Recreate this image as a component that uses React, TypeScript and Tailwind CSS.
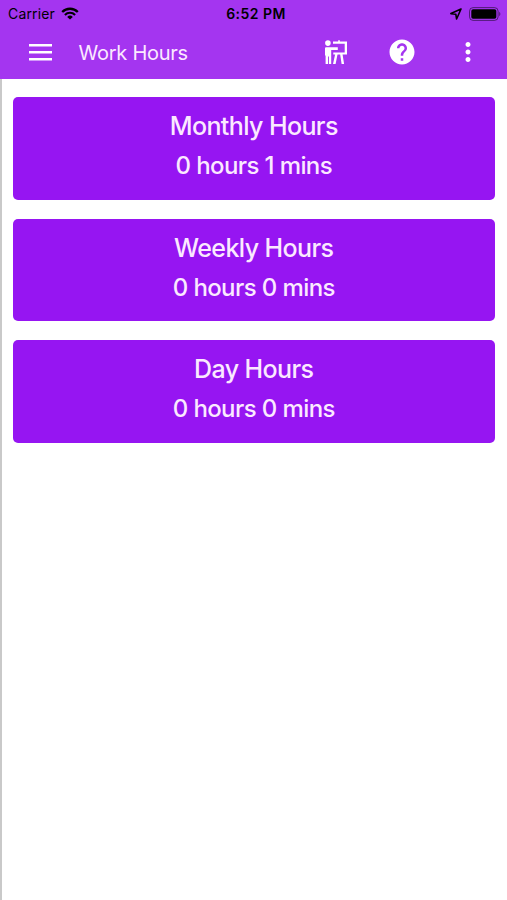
import React, { FC } from "react";
import { MdHelp, MdMoreVert } from "react-icons/md";

interface HoursCardProps {
    title: string;
    hours: number;
    mins: number;
}

const cards: HoursCardProps[] = [
    { title: "Monthly Hours", hours: 0, mins: 1 },
    { title: "Weekly Hours", hours: 0, mins: 0 },
    { title: "Day Hours", hours: 0, mins: 0 },
];

const WifiIcon: FC = () => (
    <svg className="h-[13px] w-[18px]" viewBox="0 0 18 13" fill="none" stroke="currentColor">
        <path d="M1.2 5A11 11 0 0 1 16.8 5" strokeWidth="2.3" />
        <path d="M3.9 7.9A7.2 7.2 0 0 1 14.1 7.9" strokeWidth="2.1" />
        <path d="M9 12.6 6.2 9.9a4 4 0 0 1 5.6 0z" fill="currentColor" stroke="none" />
    </svg>
);

const LocationIcon: FC = () => (
    <svg className="h-3 w-3" viewBox="0 0 12 12" fill="none" stroke="currentColor">
        <path d="M11 1 .9 5.6 5.8 6.2 6.6 11z" strokeWidth="1.6" strokeLinejoin="round" />
    </svg>
);

const BatteryIcon: FC = () => (
    <svg className="h-[14px] w-8" viewBox="0 0 32 14">
        <rect x="0.5" y="0.6" width="28.6" height="12.8" rx="3.6" fill="none" stroke="#000" strokeOpacity="0.5" />
        <rect x="2.3" y="2.2" width="25" height="9.6" rx="1.8" fill="#000" />
        <path d="M30.2 4.8v4.4c1.6-.7 1.6-3.7 0-4.4z" fill="#000" fillOpacity="0.5" />
    </svg>
);

const MenuIcon: FC = () => (
    <svg className="h-[17px] w-[23px]" viewBox="0 0 23 17" fill="currentColor">
        <path d="M0 0h23v2.6H0zM0 7h23v2.6H0zM0 14h23v2.6H0z" />
    </svg>
);

const PresenterIcon: FC = () => (
    <svg className="h-6 w-[22px]" viewBox="0 0 22 24" fill="currentColor">
        <circle cx="2.9" cy="3.1" r="2.8" />
        <path d="M1.4 7.2h11.4v2.9H6.2V24H4v-7.6h-.9V24H.6v-8.4H0V8.6c0-.9.5-1.4 1.4-1.4z" />
        <path d="M8 1.6h5.2V.2h1.6v1.4H22v13H8.3v-2.2h11.4V3.8H8z" />
        <path d="M10.2 14h2.4l-2 10H8zM15.1 14h2.4l1.6 10h-2.5z" />
    </svg>
);

const StatusBar: FC = () => (
    <div className="grid h-[27px] grid-cols-3 items-center pl-2 pr-[6px] text-[14px] text-black">
        <div className="flex items-center gap-[6px]">
            <span className="tracking-[0.15px]">Carrier</span>
            <WifiIcon />
        </div>
        <span className="pl-[3px] text-center font-semibold tracking-[0.45px]">6:52 PM</span>
        <div className="flex items-center justify-end gap-[7px]">
            <LocationIcon />
            <BatteryIcon />
        </div>
    </div>
);

const Header: FC = () => (
    <header className="h-[79px] bg-[#a435f0]">
        <StatusBar />
        <div className="flex h-[50px] items-center pl-[28.5px] pr-[24px] text-white">
            <button aria-label="Menu">
                <MenuIcon />
            </button>
            <h1 className="ml-[27px] flex-1 pt-px text-[20px] leading-none tracking-[-0.25px] text-[#fbe9ff]">
                Work Hours
            </h1>
            <button aria-label="Presentation">
                <PresenterIcon />
            </button>
            <button className="ml-[40px]" aria-label="Help">
                <MdHelp className="size-[30px]" />
            </button>
            <button className="ml-[36px]" aria-label="More">
                <MdMoreVert className="size-[30px]" />
            </button>
        </div>
    </header>
);

const HoursCard: FC<HoursCardProps> = ({ title, hours, mins }) => (
    <section className="h-[102.5px] rounded-[5px] bg-[#9615f2] pt-[9px] text-center font-medium tracking-[-0.6px] text-[#fbe9ff]">
        <h2 className="text-[25px] leading-10">{title}</h2>
        <p className="text-[24px] leading-10">
            {hours} hours {mins} mins
        </p>
    </section>
);

export default function App() {
    return (
        <div className="flex h-screen flex-col bg-white font-['Inter','Liberation_Sans',sans-serif]">
            <Header />
            <main className="flex flex-1 flex-col gap-[19px] border-l-2 border-[#c9c9c9] pl-[11px] pr-[12.5px] pt-[18.25px]">
                {cards.map((card) => (
                    <HoursCard key={card.title} {...card} />
                ))}
            </main>
        </div>
    );
}
